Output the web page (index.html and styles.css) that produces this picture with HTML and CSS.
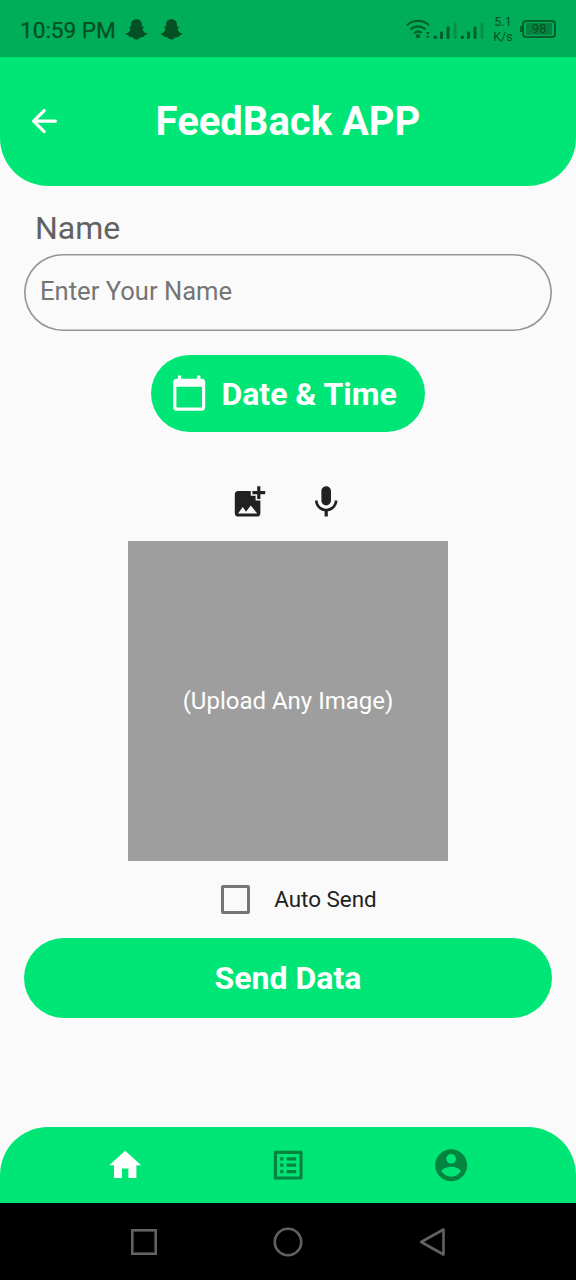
FILE: index.html
```
<!DOCTYPE html>
<html lang="en">
<head>
<meta charset="utf-8">
<title>FeedBack APP</title>
<link rel="stylesheet" href="styles.css">
</head>
<body>
<div class="screen">
  <div class="status">
    <span class="clock">10:59 PM</span>
    <svg class="ghost" viewBox="0 0 24 24"><path d="M12 1.200c3.700 0 5.700 2.500 5.700 5.700v2.200l2.500-.3-2 2.600c.7 2.500 2.400 4 5 4.900.5.600-.4 1.400-2.900 1.900l-.7 1.700-3.300.2c-1.600 1.700-2.900 2.400-4.300 2.400s-2.700-.7-4.300-2.400l-3.300-.2-.7-1.700C1.200 17.700.3 16.900.8 16.300c2.600-.9 4.300-2.400 5-4.900l-2-2.600 2.500.3V6.900c0-3.200 2-5.700 5.700-5.700z"/></svg>
    <svg class="ghost second" viewBox="0 0 24 24"><path d="M12 1.200c3.700 0 5.700 2.500 5.700 5.700v2.200l2.500-.3-2 2.600c.7 2.500 2.400 4 5 4.900.5.600-.4 1.400-2.900 1.900l-.7 1.700-3.300.2c-1.600 1.700-2.900 2.400-4.300 2.400s-2.700-.7-4.300-2.400l-3.300-.2-.7-1.700C1.200 17.700.3 16.900.8 16.300c2.600-.9 4.300-2.400 5-4.900l-2-2.600 2.500.3V6.900c0-3.200 2-5.700 5.700-5.700z"/></svg>
    <svg class="signals" viewBox="0 0 80 24" width="80" height="24">
      <g fill="none" stroke="#04602c" stroke-width="2.200">
        <path d="M1 7.300c6-6 16-6 22 0M4.500 11.500c4.200-4.300 10.800-4.300 15 0M8.200 15.300c2.300-2.200 5.300-2.200 7.600 0"/>
      </g>
      <g fill="#04602c">
        <circle cx="12" cy="18.200" r="2.100"/>
        <rect x="20.500" y="14" width="2.500" height="2"/><rect x="20.500" y="17.600" width="2.500" height="2"/>
        <rect x="27.500" y="17.500" width="3.500" height="3.500" rx="1.500"/><rect x="34" y="13.500" width="3" height="7.500" rx="1"/><rect x="40.500" y="8.500" width="3" height="12.500" rx="1"/>
        <rect x="54.500" y="17.500" width="3.500" height="3.500" rx="1.500"/><rect x="61" y="13.500" width="3" height="7.500" rx="1"/><rect x="67.500" y="8.500" width="3" height="12.500" rx="1"/>
      </g>
      <g fill="#04904a"><rect x="47.500" y="4.500" width="3" height="16.500" rx="1"/><rect x="74.500" y="4.500" width="3" height="16.500" rx="1"/></g>
    </svg>
    <div class="speed"><span>5.1</span><span>K/s</span></div>
    <div class="battery"><span class="level">98</span></div>
  </div>

  <header class="header">
    <svg class="icon back" viewBox="0 0 24 24"><path d="M19 11H7.830l4.880-4.880c.39-.39.39-1.030 0-1.420-.39-.39-1.020-.39-1.410 0l-6.590 6.590c-.39.39-.39 1.020 0 1.410l6.590 6.590c.39.39 1.020.39 1.410 0 .39-.39.39-1.020 0-1.410L7.830 13H19c.55 0 1-.45 1-1s-.45-1-1-1z"/></svg>
    <h1 class="title">FeedBack APP</h1>
  </header>

  <main class="form">
    <label class="label" for="name">Name</label>
    <input class="field" id="name" type="text" placeholder="Enter Your Name">
    <button class="date">
      <svg class="icon" viewBox="0 0 24 24"><path d="M20 3h-1V1h-2v2H7V1H5v2H4c-1.100 0-2 .9-2 2v16c0 1.100.9 2 2 2h16c1.100 0 2-.9 2-2V5c0-1.100-.9-2-2-2zm0 18H4V8h16v13z"/></svg>
      <span>Date &amp; Time</span>
    </button>
    <div class="tools">
      <svg class="icon" viewBox="0 0 24 24"><path d="M19 7v2.990s-1.990.01-2 0V7h-3s.01-1.990 0-2h3V2h2v3h3v2h-3zm-3 4V8h-3V5H5c-1.100 0-2 .9-2 2v12c0 1.100.9 2 2 2h12c1.100 0 2-.9 2-2v-8h-3zM5 19l3-4 2 3 3-4 4 5H5z"/></svg>
      <svg class="icon" viewBox="0 0 24 24"><path d="M12 14c1.660 0 2.990-1.340 2.990-3L15 5c0-1.660-1.340-3-3-3S9 3.340 9 5v6c0 1.660 1.340 3 3 3zm5.300-3c0 3-2.540 5.100-5.300 5.100S6.700 14 6.700 11H5c0 3.410 2.720 6.230 6 6.720V21h2v-3.280c3.280-.48 6-3.300 6-6.720h-1.700z"/></svg>
    </div>
    <div class="upload"><span>(Upload Any Image)</span></div>
    <div class="auto"><span class="box"></span><span class="auto-text">Auto Send</span></div>
    <button class="send"><span>Send Data</span></button>
  </main>

  <nav class="tabs">
    <svg class="icon active" viewBox="0 0 24 24"><path d="M10 20v-6h4v6h5v-8h3L12 3 2 12h3v8z"/></svg>
    <svg class="icon" viewBox="0 0 24 24"><path d="M19 5v14H5V5h14m1.100-2H3.900c-.5 0-.9.4-.9.9v16.200c0 .4.4.9.9.9h16.200c.4 0 .9-.5.9-.9V3.900c0-.5-.5-.9-.9-.9zM11 7h6v2h-6V7zm0 4h6v2h-6v-2zm0 4h6v2h-6zM7 7h2v2H7zm0 4h2v2H7zm0 4h2v2H7z"/></svg>
    <svg class="icon" viewBox="0 0 24 24"><path d="M12 2C6.480 2 2 6.480 2 12s4.480 10 10 10 10-4.480 10-10S17.520 2 12 2zm0 3c1.660 0 3 1.340 3 3s-1.340 3-3 3-3-1.340-3-3 1.340-3 3-3zm0 14.200c-2.500 0-4.710-1.280-6-3.220.03-1.990 4-3.080 6-3.080 1.990 0 5.970 1.090 6 3.080-1.290 1.940-3.500 3.220-6 3.220z"/></svg>
  </nav>

  <div class="system">
    <svg viewBox="0 0 32 32"><rect x="4.300" y="4.300" width="23.400" height="23.400"/></svg>
    <svg viewBox="0 0 32 32"><circle cx="16" cy="16" r="13.200"/></svg>
    <svg viewBox="0 0 32 32"><path d="M27.500 3.500v25L5.200 16z" stroke-linejoin="round"/></svg>
  </div>
</div>
</body>
</html>
```
FILE: styles.css
```
* { box-sizing: border-box; }
body { margin: 0; font-family: Roboto, "Liberation Sans", sans-serif; background: #fafafa; }
.screen { width: 576px; height: 1280px; display: flex; flex-direction: column; background: #fafafa; overflow: hidden; }
.icon { width: 38.4px; height: 38.4px; fill: currentColor; flex: none; display: block; }
button { border: 0; padding: 0; font-family: inherit; color: #fff; background: #00e676; }

.status { height: 57px; flex: none; background: #00ae59; display: flex; align-items: center; padding: 2px 20px 0; color: #045024; }
.clock { font-size: 22.6px; width: 105px; padding-top: 1px; white-space: nowrap; -webkit-text-stroke: 0.25px #045024; }
.ghost { width: 23px; height: 23px; fill: #045024; }
.ghost.second { margin-left: 12px; }
.signals { margin-left: 223px; flex: none; }
.speed { display: flex; flex-direction: column; align-items: center; font-size: 12.5px; line-height: 15px; width: 22px; margin: -1px 0 0 6px; color: #045024; }
.battery { position: relative; width: 34px; height: 18px; margin: -2px 0 0 8px; border: 2px solid #04602c; border-radius: 4px; padding: 1px 2px; flex: none; }
.battery::before { content: ""; position: absolute; left: -4px; top: 4px; width: 2px; height: 6px; background: #04602c; }
.level { display: block; background: #04843f; font-size: 13px; line-height: 12px; text-align: center; color: #045024; }

.header { height: 128.5px; flex: none; background: #00e676; border-radius: 0 0 48px 48px; display: grid; grid-template-columns: 64px 1fr 64px; align-items: center; color: #fff; }
.back { margin-left: 25.2px; }
.title { margin: 0; padding-top: 2px; font-size: 40px; line-height: 48px; font-weight: 700; text-align: center; white-space: nowrap; }

.form { flex: 1; padding: 23px 24px 0; display: flex; flex-direction: column; align-items: center; }
.label { align-self: flex-start; margin-left: 11px; font-size: 32px; line-height: 38px; color: #616161; }
.field { width: 528px; height: 77px; margin-top: 7.5px; border: 0; box-shadow: inset 0 0 0 1.6px #959595; border-radius: 39px; background: transparent; padding: 0 16px 3px; font-family: inherit; font-size: 25.6px; color: #212121; outline: 0; }
.field::placeholder { color: #757575; opacity: 1; }
.date { width: 274px; height: 77px; margin-top: 24px; border-radius: 39px; display: flex; align-items: center; padding-left: 19.2px; gap: 12.8px; font-size: 32px; font-weight: 700; white-space: nowrap; }
.tools { margin-top: 51.3px; display: flex; gap: 38.4px; color: #212121; }
.upload { width: 320px; height: 320px; margin-top: 19.3px; background: #9e9e9e; color: #fff; font-size: 24px; display: flex; align-items: center; justify-content: center; }
.auto { height: 76.8px; padding-left: 22px; display: flex; align-items: center; color: #212121; font-size: 22.4px; white-space: nowrap; }
.box { width: 29px; height: 29px; border: 3px solid #757575; border-radius: 2px; margin-right: 24px; flex: none; }
.send { width: 528px; height: 80px; border-radius: 40px; font-size: 32px; font-weight: 700; }

.tabs { height: 76.5px; flex: none; background: #00e676; border-radius: 48px 48px 0 0; display: flex; justify-content: space-between; align-items: center; padding: 0 105.8px; color: #04843f; }
.active { color: #fff; }
.system { height: 77px; flex: none; background: #000; display: flex; justify-content: space-between; align-items: center; padding: 0 128px; }
.system svg { width: 32px; height: 32px; fill: none; stroke: #616161; stroke-width: 2.6; }
```
